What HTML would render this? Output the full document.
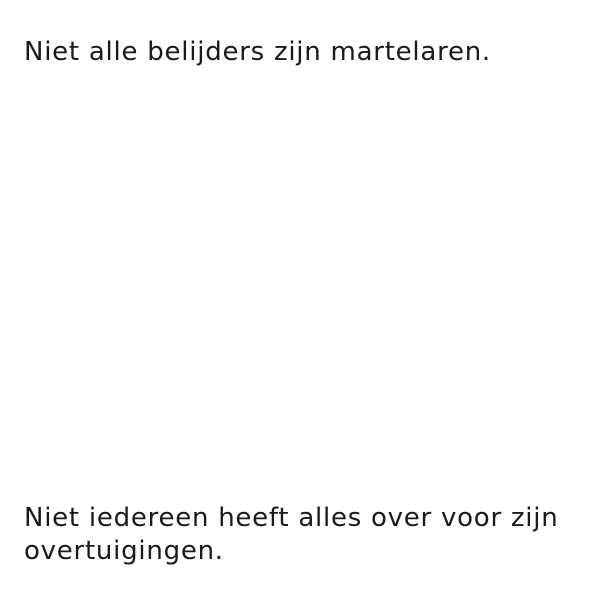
<!DOCTYPE html>
<html><head><meta charset="utf-8"><style>
html,body{margin:0;padding:0;background:#fff;width:591px;height:591px;overflow:hidden}
p{position:absolute;left:24px;margin:0;font-family:"DejaVu Sans",sans-serif;font-size:26px;line-height:33px;letter-spacing:0.75px;color:#1a1a1a;width:565px}
</style></head><body>
<p style="top:36px">Niet alle belijders zijn martelaren.</p>
<p style="top:502px">Niet iedereen heeft alles over voor zijn overtuigingen.</p>
</body></html>
